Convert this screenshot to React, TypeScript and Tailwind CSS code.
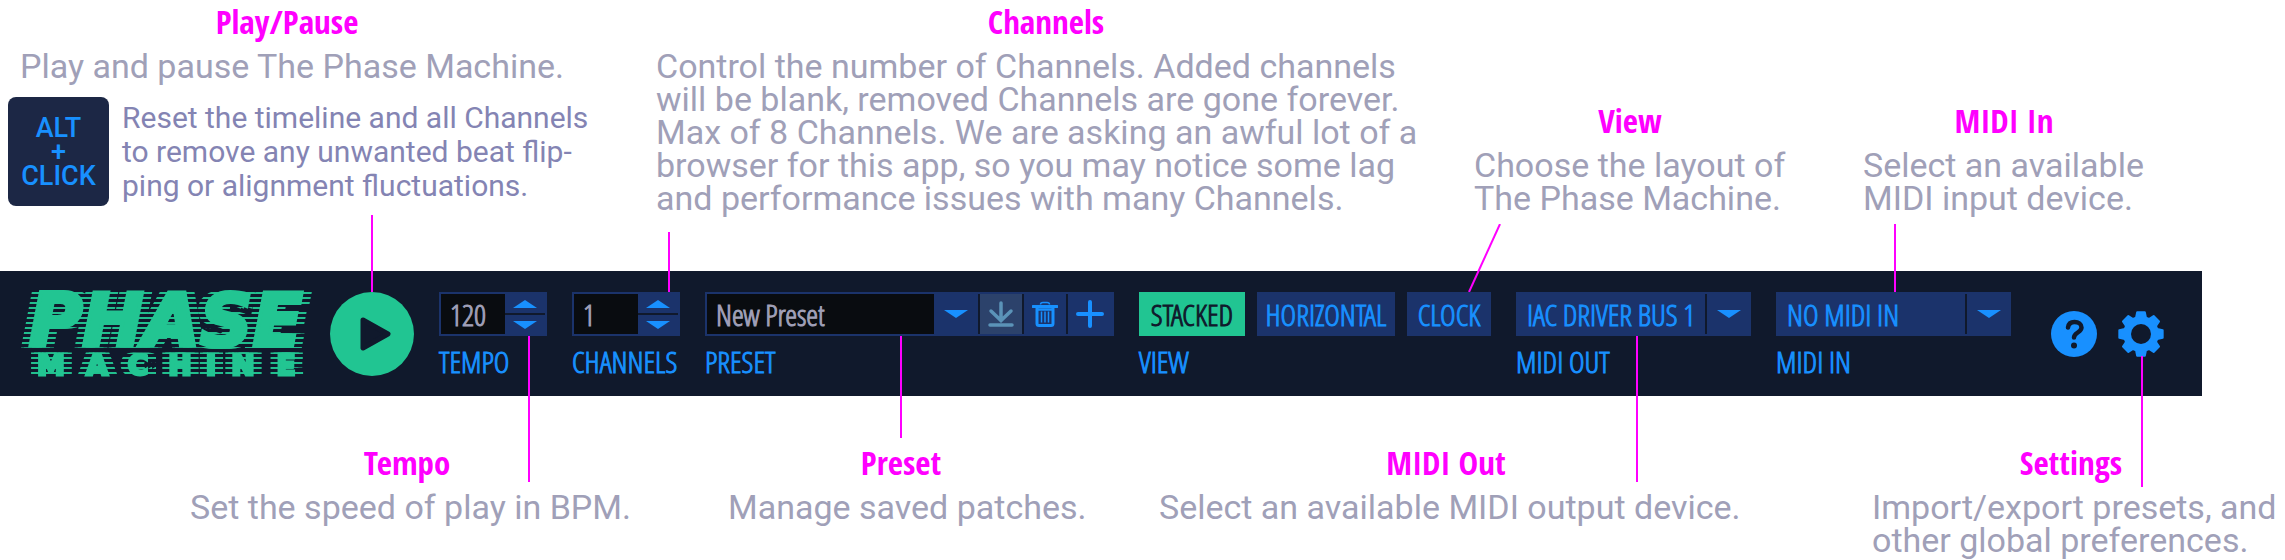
import type { ReactNode } from "react";

const BODY = "text-[34px] leading-[33px] text-[#a0a0b8] whitespace-nowrap";
const COND = "font-['Open_Sans_Condensed_Light','Open_Sans_Condensed','Open_Sans',sans-serif]";
const COND_BOLD = "font-['Open_Sans_Condensed','Open_Sans',sans-serif]";

function Note({ title, className, children }: { title: string; className: string; children: ReactNode }) {
  return (
    <section className={className}>
      <h2 className={`${COND_BOLD} mb-2 text-center text-[33px] font-bold leading-10 text-[#ff00ff]`}>{title}</h2>
      {children}
    </section>
  );
}

function Line({ className }: { className: string }) {
  return <span aria-hidden="true" className={`absolute w-0.5 bg-[#ff00ff] ${className}`} />;
}

function Field({ label, htmlFor, children }: { label: string; htmlFor?: string; children: ReactNode }) {
  return (
    <div className="relative shrink-0">
      {children}
      <label htmlFor={htmlFor} className="mt-2 block leading-9 text-[#1890ff]">
        {label}
      </label>
    </div>
  );
}

function Down() {
  return (
    <svg width="24" height="8" viewBox="0 0 24 8" fill="#1890ff">
      <path d="M0 0h24L12 8z" />
    </svg>
  );
}

function Up() {
  return (
    <svg width="24" height="8" viewBox="0 0 24 8" fill="#1890ff">
      <path d="M0 8h24L12 0z" />
    </svg>
  );
}

function Stepper({ id, name, value }: { id: string; name: string; value: string }) {
  return (
    <div className="flex h-11 w-[108px] border-2 border-[#1b336b] bg-[#1b336b]">
      <input id={id} defaultValue={value} className="w-16 bg-[#090c10] pl-[9px] text-[#a0a0b8] outline-none" />
      <div className="flex flex-1 flex-col">
        <button aria-label={`Increase ${name}`} className="flex flex-1 items-center justify-center border-b-2 border-[#10192c]">
          <Up />
        </button>
        <button aria-label={`Decrease ${name}`} className="flex flex-1 items-center justify-center">
          <Down />
        </button>
      </div>
    </div>
  );
}

function Device({ id, value }: { id: string; value: string }) {
  return (
    <div className="relative h-11 w-[235px] bg-[#1b336b]">
      <select id={id} className="h-full w-full appearance-none bg-[#1b336b] pl-[11px] text-[#1890ff] outline-none">
        <option>{value}</option>
      </select>
      <span className="pointer-events-none absolute inset-y-0.5 right-0 flex w-[46px] items-center justify-center border-l-2 border-[#10192c]">
        <Down />
      </span>
    </div>
  );
}

function Logo() {
  return (
    <svg width="296" height="86" viewBox="0 0 296 86" className="shrink-0 overflow-visible">
      <defs>
        <filter id="speed" filterUnits="userSpaceOnUse" x="-20" y="-5" width="340" height="95">
          <feOffset in="SourceGraphic" dx="-7" result="l2" />
          <feOffset in="SourceGraphic" dx="-4" result="l1" />
          <feOffset in="SourceGraphic" dx="4" result="r1" />
          <feOffset in="SourceGraphic" dx="8" result="r2" />
          <feMerge result="wide">
            <feMergeNode in="l2" />
            <feMergeNode in="l1" />
            <feMergeNode in="r1" />
            <feMergeNode in="r2" />
          </feMerge>
          <feFlood x="-20" y="0" width="340" height="2" floodColor="#21c592" floodOpacity="0.8" result="line" />
          <feComposite in="line" in2="line" operator="over" x="-20" y="0" width="340" height="5" result="cell" />
          <feTile in="cell" result="lines" />
          <feComposite in="lines" in2="wide" operator="in" result="streaks" />
          <feMerge>
            <feMergeNode in="streaks" />
            <feMergeNode in="SourceGraphic" />
          </feMerge>
        </filter>
      </defs>
      <g filter="url(#speed)" fill="#21c592" stroke="#21c592" className="font-['DejaVu_Sans',sans-serif] font-bold">
        <text x="9" y="54" fontSize="73" fontStyle="italic" strokeWidth="4">
          PHASE
        </text>
        <text x="31 77 118 160 191 223 266" y="83" fontSize="28" textAnchor="middle" strokeWidth="3">
          MACHINE
        </text>
      </g>
    </svg>
  );
}

const gearPoints = Array.from({ length: 8 }, (_, k) =>
  [
    [-10, 22],
    [10, 22],
    [17, 17],
    [28, 17],
  ].map(([a, r]) => {
    const t = ((k * 45 + a - 90) * Math.PI) / 180;
    return `${(23 + r * Math.cos(t)).toFixed(2)},${(23 + r * Math.sin(t)).toFixed(2)}`;
  }).join(" ")
).join(" ");

const VIEW_BTN = "h-11 bg-[#1b336b] text-center text-[#1890ff]";

export default function App() {
  return (
    <main className="min-h-screen w-full overflow-x-hidden bg-white font-['Roboto',sans-serif]">
      <div className="flex items-end pt-0.5 pb-14">
        <Note title="Play/Pause" className="mr-[82px] w-[574px] shrink-0 pb-[9px]">
          <p className={`${BODY} pl-5`}>Play and pause The Phase Machine.</p>
          <div className="mt-[14px] flex items-start pl-2">
            <kbd className="flex h-[109px] w-[101px] shrink-0 flex-col items-center justify-center rounded-lg bg-[#1c2745] font-['Roboto',sans-serif] text-[27px] font-medium leading-6 text-[#1890ff]">
              <span>ALT</span>
              <span>+</span>
              <span>CLICK</span>
            </kbd>
            <p className="mt-1 pl-[13px] text-[30px] leading-[34px] whitespace-nowrap text-[#8484b3]">
              Reset the timeline and all Channels
              <br />
              to remove any unwanted beat flip-
              <br />
              ping or alignment fluctuations.
            </p>
          </div>
        </Note>
        <Note title="Channels" className="mr-[38px] w-[780px] shrink-0">
          <p className={BODY}>
            Control the number of Channels. Added channels
            <br />
            will be blank, removed Channels are gone forever.
            <br />
            Max of 8 Channels. We are asking an awful lot of a
            <br />
            browser for this app, so you may notice some lag
            <br />
            and performance issues with many Channels.
          </p>
        </Note>
        <Note title="View" className="mr-[77px] w-[312px] shrink-0">
          <p className={BODY}>
            Choose the layout of
            <br />
            The Phase Machine.
          </p>
        </Note>
        <Note title="MIDI In" className="w-[282px] shrink-0">
          <p className={BODY}>
            Select an available
            <br />
            MIDI input device.
          </p>
        </Note>
      </div>

      <div className={`${COND} mr-[83px] flex items-start gap-[25px] bg-[#10192c] pt-[21px] pr-[38px] pb-4 pl-5 text-[30px] font-normal whitespace-nowrap [-webkit-text-stroke-width:1px]`}>
        <div className="flex shrink-0 gap-[14px]">
          <Logo />
          <div className="relative">
            <button aria-label="Play" className="block">
              <svg width="84" height="84" viewBox="0 0 84 84">
                <circle cx="42" cy="42" r="42" fill="#21c592" />
                <path d="M33 28L58 42L33 56Z" fill="#10192c" stroke="#10192c" strokeWidth="5" strokeLinejoin="round" />
              </svg>
            </button>
            <Line className="bottom-full left-[41px] h-[77px]" />
          </div>
        </div>

        <Field label="TEMPO" htmlFor="tempo">
          <Stepper id="tempo" name="tempo" value="120" />
          <Line className="top-11 left-[89px] h-[146px]" />
        </Field>

        <Field label="CHANNELS" htmlFor="channels">
          <Stepper id="channels" name="channels" value="1" />
          <Line className="bottom-full left-24 h-[60px]" />
        </Field>

        <Field label="PRESET" htmlFor="preset">
          <div className="flex h-11 w-[409px] border-2 border-[#1b336b] bg-[#1b336b]">
            <input id="preset" defaultValue="New Preset" className="w-[227px] bg-[#090c10] pl-[9px] text-[#a0a0b8] outline-none" />
            <button aria-label="Open preset list" className="flex w-11 items-center justify-center">
              <Down />
            </button>
            <button aria-label="Save preset" className="flex w-11 items-center justify-center border-l-2 border-[#10192c] bg-[#2c426b]">
              <svg width="26" height="26" viewBox="0 0 26 26" fill="none" stroke="#5b93b8" strokeWidth="3.5" strokeLinecap="round">
                <path d="M13 2v16M3 10l10 9.500 10-9.500M2 24h22" />
              </svg>
            </button>
            <button aria-label="Delete preset" className="flex w-11 items-center justify-center border-l-2 border-[#10192c]">
              <svg width="26" height="26" viewBox="0 0 26 26" fill="none" stroke="#1890ff">
                <path d="M8.500 3.500Q8.500 1.500 11 1.500H15Q17.500 1.500 17.500 3.500" strokeWidth="1.5" />
                <path d="M1 5.500H25" strokeWidth="3" strokeLinecap="round" />
                <path d="M5 6V22.500Q5 24.500 7 24.500H19Q21 24.500 21 22.500V6" strokeWidth="3" />
                <path d="M5 8.500H21" strokeWidth="2.5" />
                <path d="M9.500 10.500V21.500M13 10.500V21.500M16.500 10.500V21.500" strokeWidth="1.5" />
              </svg>
            </button>
            <button aria-label="Add preset" className="flex flex-1 items-center justify-center border-l-2 border-[#10192c]">
              <svg width="28" height="28" viewBox="0 0 28 28" fill="none" stroke="#1890ff" strokeWidth="4" strokeLinecap="round">
                <path d="M14 2v24M2 14h24" />
              </svg>
            </button>
          </div>
          <Line className="top-11 left-[195px] h-[102px]" />
        </Field>

        <Field label="VIEW">
          <div className="flex gap-3">
            <button className="h-11 w-[106px] bg-[#21c592] text-center text-[#10192c]">STACKED</button>
            <button className={`${VIEW_BTN} w-[138px]`}>HORIZONTAL</button>
            <button className={`${VIEW_BTN} w-[84px]`}>CLOCK</button>
          </div>
          <svg aria-hidden="true" width="34" height="68" viewBox="0 0 34 68" className="absolute bottom-full left-[329px]">
            <path d="M1 68L32 0" stroke="#ff00ff" strokeWidth="2" />
          </svg>
        </Field>

        <Field label="MIDI OUT" htmlFor="midi-out">
          <Device id="midi-out" value="IAC DRIVER BUS 1" />
          <Line className="top-11 left-[120px] h-[146px]" />
        </Field>

        <Field label="MIDI IN" htmlFor="midi-in">
          <Device id="midi-in" value="NO MIDI IN" />
          <Line className="bottom-full left-[118px] h-[68px]" />
        </Field>

        <div className="ml-auto flex gap-[21px] pt-[19px]">
          <button aria-label="Help">
            <svg width="46" height="46" viewBox="0 0 46 46">
              <circle cx="23" cy="23" r="23" fill="#1890ff" />
              <path d="M17 16.500C17.500 12.500 20 11 23.500 11C27.500 11 30.500 13 30.500 16.500C30.500 21.500 23 21.500 23 26.500" fill="none" stroke="#10192c" strokeWidth="4.5" strokeLinecap="round" />
              <circle cx="23" cy="34.5" r="3" fill="#10192c" />
            </svg>
          </button>
          <div className="relative">
            <button aria-label="Settings" className="block">
              <svg width="46" height="46" viewBox="0 0 46 46">
                <polygon points={gearPoints} fill="#1890ff" stroke="#1890ff" strokeWidth="2" strokeLinejoin="round" />
                <circle cx="23" cy="23" r="10" fill="#10192c" />
              </svg>
            </button>
            <Line className="top-[45px] left-[23px] h-[131px]" />
          </div>
        </div>
      </div>

      <div className="flex items-start pt-[47px] pl-[190px]">
        <Note title="Tempo" className="mr-[104px] w-[434px] shrink-0">
          <p className={BODY}>Set the speed of play in BPM.</p>
        </Note>
        <Note title="Preset" className="mr-[85px] w-[346px] shrink-0">
          <p className={BODY}>Manage saved patches.</p>
        </Note>
        <Note title="MIDI Out" className="mr-[139px] w-[574px] shrink-0">
          <p className={BODY}>Select an available MIDI output device.</p>
        </Note>
        <Note title="Settings" className="w-[398px] shrink-0">
          <p className={BODY}>
            Import/export presets, and
            <br />
            other global preferences.
          </p>
        </Note>
      </div>
    </main>
  );
}
